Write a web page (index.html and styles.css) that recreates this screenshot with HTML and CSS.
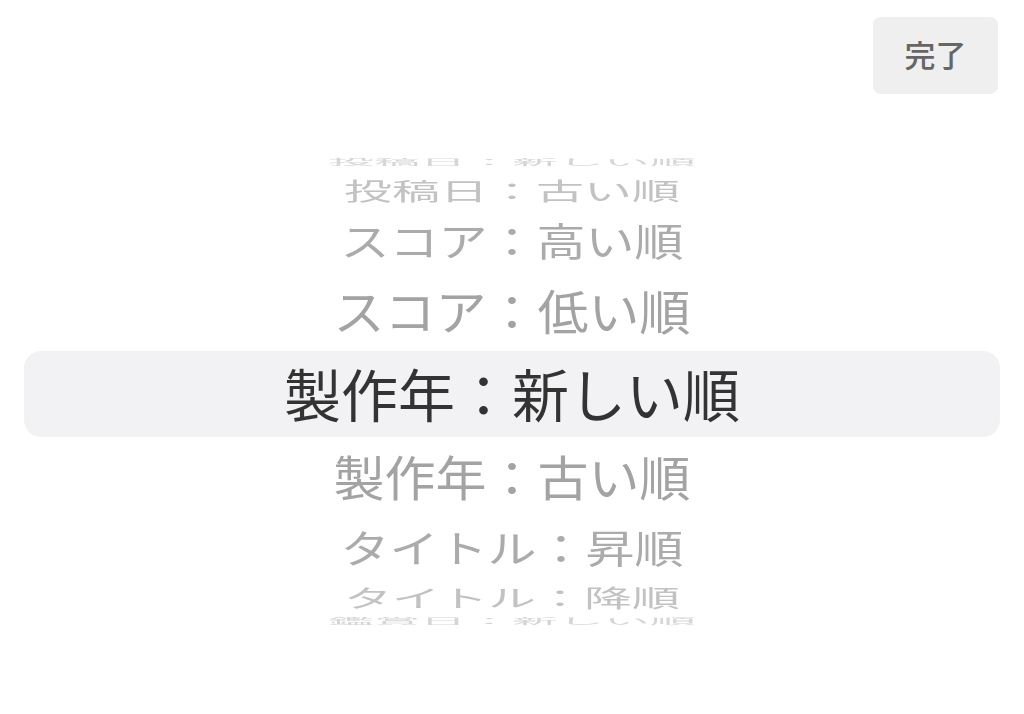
FILE: index.html
```html
<!DOCTYPE html>
<html lang="ja">
<head>
    <meta charset="UTF-8">
    <meta name="viewport" content="width=device-width, initial-scale=1.0">
    <title>並び替え</title>
    <link rel="stylesheet" href="styles.css">
</head>
<body>
    <div class="topbar">
        <button class="done">完了</button>
    </div>

    <!-- ピッカー（選択中は中央の行） -->
    <div class="wheel">
        <div class="row up4"><span>投稿日：新しい順</span></div>
        <div class="row up3"><span>投稿日：古い順</span></div>
        <div class="row up2"><span>スコア：高い順</span></div>
        <div class="row up1"><span>スコア：低い順</span></div>
        <div class="row selected"><span>製作年：新しい順</span></div>
        <div class="row down1"><span>製作年：古い順</span></div>
        <div class="row down2"><span>タイトル：昇順</span></div>
        <div class="row down3"><span>タイトル：降順</span></div>
        <div class="row down4"><span>鑑賞日：新しい順</span></div>
    </div>
</body>
</html>
```

FILE: styles.css
```css
body {
    margin: 0;
    background: #fff;
    font-family: "Noto Sans CJK JP", "Noto Sans", sans-serif;
}
.topbar {
    display: flex;
    justify-content: flex-end;
    padding: 17px 26px 0 0;
}
.done {
    width: 125px;
    height: 77px;
    border: none;
    border-radius: 8px;
    background: #efefef;
    color: #666;
    font-family: inherit;
    font-size: 31px;
    font-weight: 500;
    padding: 0 0 4px;
}

.wheel {
    margin-top: 60px;
    display: flex;
    flex-direction: column;
}
.row {
    display: flex;
    align-items: center;
    justify-content: center;
    overflow: visible;
    white-space: nowrap;
}
.row span {
    display: inline-block;
    line-height: 1;
}

.selected {
    height: 86px;
    margin: 0 24px;
    border-radius: 17px;
    background: #f2f2f4;
    color: #333;
    font-size: 57px;
}
.selected span { margin-top: -4px; }

.up1, .down1 { font-size: 51px; color: #a3a3a3; }
.up2, .down2 { font-size: 49px; color: #ababab; }
.up3, .down3 { font-size: 48px; color: #c2c2c2; }
.up4, .down4 { font-size: 46px; color: #d6d6d6; }

.up1 span, .down1 span { transform: scaleY(0.93); }
.up2 span, .down2 span { transform: scaleY(0.78); }
.up3 span, .down3 span { transform: scaleY(0.5); filter: blur(0.3px); }
.up4 span, .down4 span { transform: scaleY(0.17); filter: blur(0.6px); }

.up4 { height: 16px; }
.up3 { height: 38px; }
.up2 { height: 62px; }
.up1 { height: 81px; }
.down1 { height: 79px; }
.down2 { height: 60px; }
.down3 { height: 40px; }
.down4 { height: 10px; }
```
